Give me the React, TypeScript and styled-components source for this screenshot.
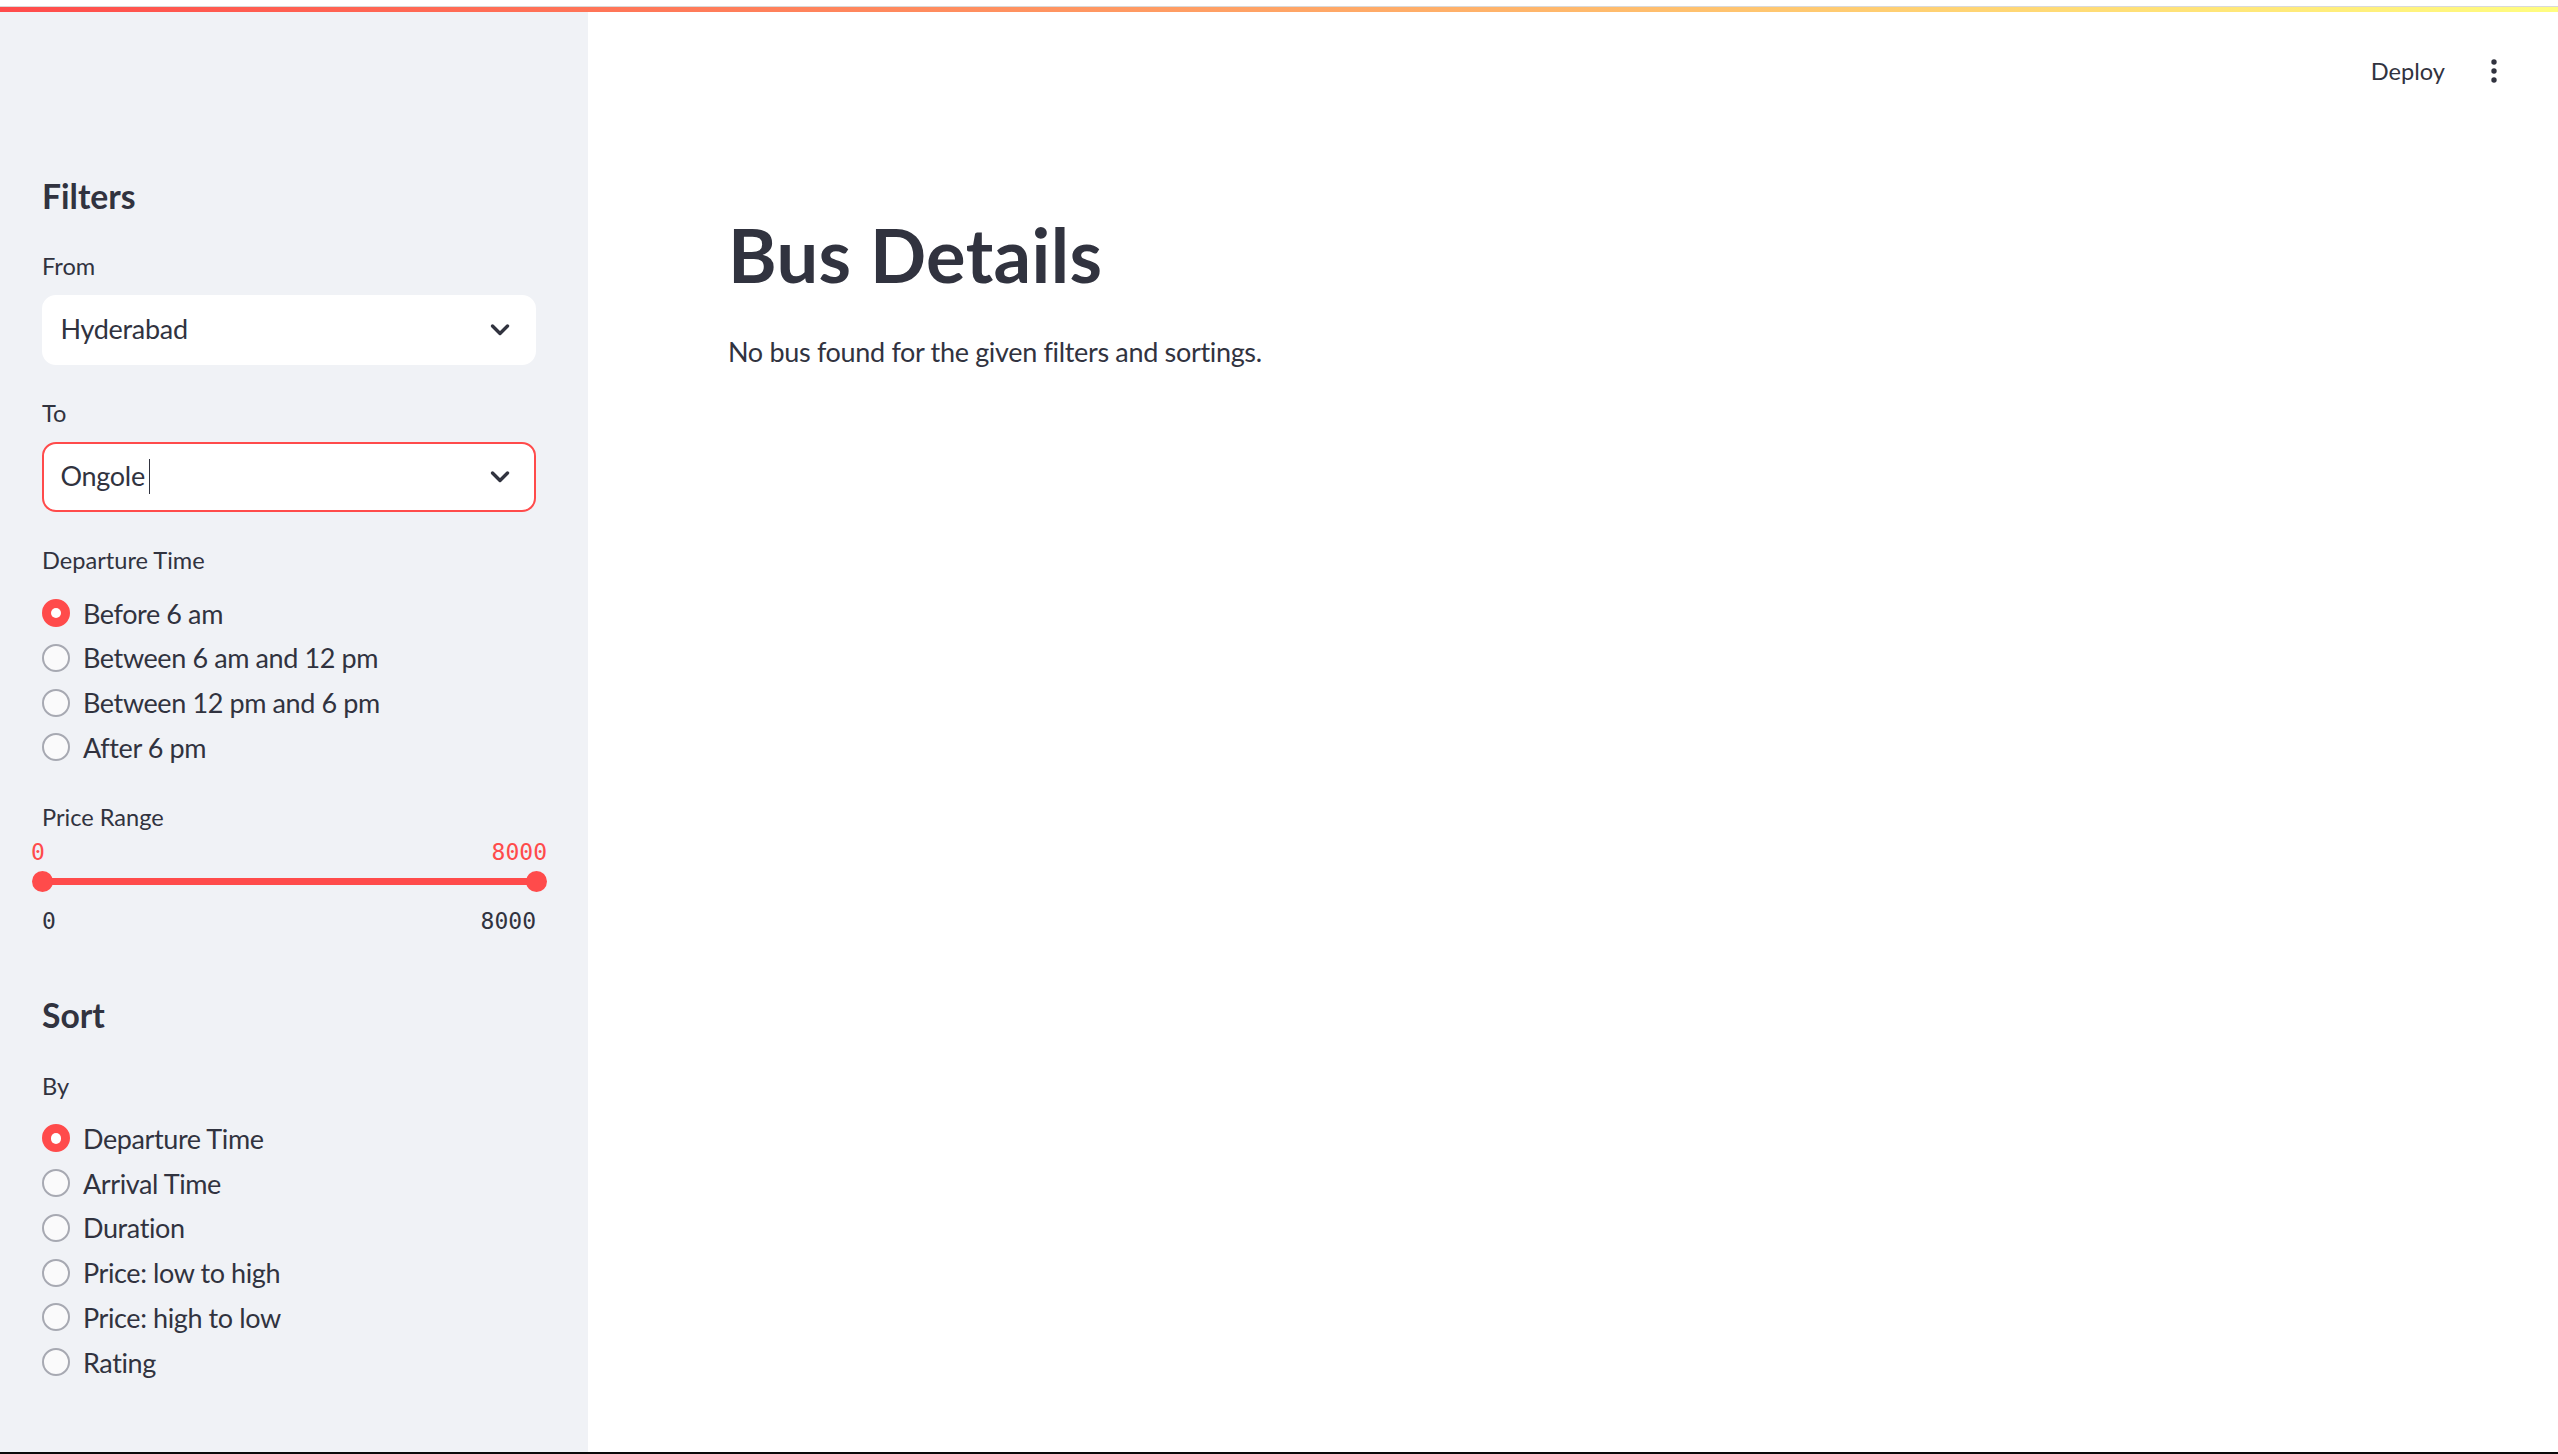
import React from "react";
import styled, { createGlobalStyle } from "styled-components";

const GlobalStyle = createGlobalStyle`
  html, body { margin: 0; padding: 0; background: #ffffff; }
  body { font-family: Lato, "Noto Sans", sans-serif; color: #31333f; }
  *, *::before, *::after { box-sizing: border-box; }
`;

const Page = styled.div`
  height: 100vh;
  display: flex;
  flex-direction: column;
  overflow: hidden;
`;

const TopStrip = styled.div`
  height: 7px;
  flex-shrink: 0;
  background: #ffffff;
  border-bottom: 1px solid #d9d9d9;
`;

const Decoration = styled.div`
  height: 5px;
  flex-shrink: 0;
  background: linear-gradient(90deg, #ff4b4b, #fffd80);
`;

const Body = styled.div`
  flex: 1;
  min-height: 0;
  display: flex;
`;

const BottomRule = styled.div`
  height: 2px;
  flex-shrink: 0;
  background: #0a0a0a;
`;

const Sidebar = styled.aside`
  width: 588px;
  flex-shrink: 0;
  background: #f0f2f6;
  padding: 163.8px 52px 0 42px;
  display: flex;
  flex-direction: column;
`;

const SideHeading = styled.h2<{ $mt?: number }>`
  margin: ${(p) => p.$mt ?? 0}px 0 0;
  font-size: 33.7px;
  line-height: 1.2;
  font-weight: 700;
  color: #31333f;
`;

const FieldLabel = styled.div<{ $mt: number }>`
  margin-top: ${(p) => p.$mt}px;
  height: 36px;
  font-size: 23.6px;
  line-height: 36px;
  color: #31333f;
`;

const SelectBox = styled.div<{ $focused?: boolean }>`
  margin-top: 11.1px;
  height: 70px;
  display: flex;
  align-items: center;
  justify-content: space-between;
  padding: 0 20px 0 16.5px;
  background: #ffffff;
  border: 2px solid ${(p) => (p.$focused ? "#ff4b4b" : "#ffffff")};
  border-radius: 14px;
`;

const SelectValue = styled.div`
  display: flex;
  align-items: center;
  margin-bottom: 3px;
  font-size: 27px;
  line-height: 1;
  letter-spacing: -0.3px;
  color: #31333f;
`;

const Caret = styled.span`
  display: inline-block;
  width: 1.6px;
  height: 35px;
  margin-left: 4px;
  margin-top: 1px;
  background: #31333f;
`;

const RadioGroup = styled.div<{ $mt: number }>`
  margin-top: ${(p) => p.$mt}px;
  display: flex;
  flex-direction: column;
`;

const RadioRow = styled.div`
  height: 44.75px;
  display: flex;
  align-items: center;
  gap: 13px;
`;

const RadioCircle = styled.span<{ $checked?: boolean }>`
  width: 28px;
  height: 28px;
  flex-shrink: 0;
  border-radius: 50%;
  display: flex;
  align-items: center;
  justify-content: center;
  background: ${(p) => (p.$checked ? "#ff4b4b" : "#fafafb")};
  border: 2px solid ${(p) => (p.$checked ? "#ff4b4b" : "#a7a9b2")};
`;

const RadioDot = styled.span`
  width: 10.5px;
  height: 10.5px;
  border-radius: 50%;
  background: #ffffff;
`;

const RadioText = styled.span`
  font-size: 27px;
  line-height: 1;
  letter-spacing: -0.4px;
  color: #31333f;
`;

const SliderBlock = styled.div`
  margin-top: 5.1px;
  display: flex;
  flex-direction: column;
`;

const MonoRow = styled.div<{ $color: string; $bleed: number; $mt: number }>`
  margin: ${(p) => p.$mt}px ${(p) => -p.$bleed}px 0;
  height: 24px;
  display: flex;
  justify-content: space-between;
  font-family: "DejaVu Sans Mono", "Liberation Mono", monospace;
  font-size: 23px;
  line-height: 24px;
  color: ${(p) => p.$color};
`;

const TrackArea = styled.div`
  margin-top: 6.5px;
  height: 21px;
  position: relative;
  display: flex;
  align-items: center;
`;

const Rail = styled.div`
  width: 100%;
  height: 7px;
  border-radius: 4px;
  background: #ff4b4b;
`;

const Thumb = styled.span<{ $side: "left" | "right" }>`
  position: absolute;
  top: 0;
  ${(p) => p.$side}: -10.5px;
  width: 21px;
  height: 21px;
  border-radius: 50%;
  background: #ff4b4b;
`;

const Main = styled.div`
  flex: 1;
  display: flex;
  flex-direction: column;
  background: #ffffff;
`;

const Header = styled.header`
  height: 118.7px;
  flex-shrink: 0;
  display: flex;
  align-items: center;
  justify-content: flex-end;
  gap: 29px;
  padding-right: 44px;
`;

const DeployButton = styled.span`
  font-size: 23.6px;
  line-height: 1;
  color: #31333f;
`;

const MenuButton = styled.span`
  width: 40px;
  height: 40px;
  display: flex;
  align-items: center;
  justify-content: center;
`;

const Content = styled.main`
  padding: 80.3px 0 0 140px;
`;

const Title = styled.h1`
  margin: 0;
  font-size: 74px;
  line-height: 1.2;
  font-weight: 700;
  letter-spacing: 0.4px;
  color: #31333f;
`;

const Message = styled.p`
  margin: 32.5px 0 0;
  font-size: 27px;
  line-height: 1.5;
  letter-spacing: -0.33px;
  color: #31333f;
`;

const Chevron = () => (
  <svg width="28" height="28" viewBox="0 0 28 28" fill="none">
    <path
      d="M6.5 10 L14 17.5 L21.5 10"
      stroke="#31333f"
      strokeWidth="3.4"
      strokeLinecap="round"
      strokeLinejoin="round"
    />
  </svg>
);

const Dots = () => (
  <svg width="10" height="30" viewBox="0 0 10 30">
    <circle cx="5" cy="6" r="2.7" fill="#31333f" />
    <circle cx="5" cy="15" r="2.7" fill="#31333f" />
    <circle cx="5" cy="24" r="2.7" fill="#31333f" />
  </svg>
);

const Radios = ({ items, checked, mt }: { items: string[]; checked: number; mt: number }) => (
  <RadioGroup $mt={mt}>
    {items.map((t, i) => (
      <RadioRow key={t}>
        <RadioCircle $checked={i === checked}>{i === checked && <RadioDot />}</RadioCircle>
        <RadioText>{t}</RadioText>
      </RadioRow>
    ))}
  </RadioGroup>
);

export default function App() {
  return (
    <Page>
      <GlobalStyle />
      <TopStrip />
      <Decoration />
      <Body>
        <Sidebar>
          <SideHeading>Filters</SideHeading>
          <FieldLabel $mt={31.7}>From</FieldLabel>
          <SelectBox>
            <SelectValue>Hyderabad</SelectValue>
            <Chevron />
          </SelectBox>
          <FieldLabel $mt={29.9}>To</FieldLabel>
          <SelectBox $focused>
            <SelectValue>
              Ongole
              <Caret />
            </SelectValue>
            <Chevron />
          </SelectBox>
          <FieldLabel $mt={29.9}>Departure Time</FieldLabel>
          <Radios
            mt={12.8}
            checked={0}
            items={["Before 6 am", "Between 6 am and 12 pm", "Between 12 pm and 6 pm", "After 6 pm"]}
          />
          <FieldLabel $mt={29.5}>Price Range</FieldLabel>
          <SliderBlock>
            <MonoRow $color="#ff4b4b" $bleed={11} $mt={0}>
              <span>0</span>
              <span>8000</span>
            </MonoRow>
            <TrackArea>
              <Rail />
              <Thumb $side="left" />
              <Thumb $side="right" />
            </TrackArea>
            <MonoRow $color="#31333f" $bleed={0} $mt={17.5}>
              <span>0</span>
              <span>8000</span>
            </MonoRow>
          </SliderBlock>
          <SideHeading $mt={61.8}>Sort</SideHeading>
          <FieldLabel $mt={32.7}>By</FieldLabel>
          <Radios
            mt={11.7}
            checked={0}
            items={[
              "Departure Time",
              "Arrival Time",
              "Duration",
              "Price: low to high",
              "Price: high to low",
              "Rating",
            ]}
          />
        </Sidebar>
        <Main>
          <Header>
            <DeployButton>Deploy</DeployButton>
            <MenuButton>
              <Dots />
            </MenuButton>
          </Header>
          <Content>
            <Title>Bus Details</Title>
            <Message>No bus found for the given filters and sortings.</Message>
          </Content>
        </Main>
      </Body>
      <BottomRule />
    </Page>
  );
}
